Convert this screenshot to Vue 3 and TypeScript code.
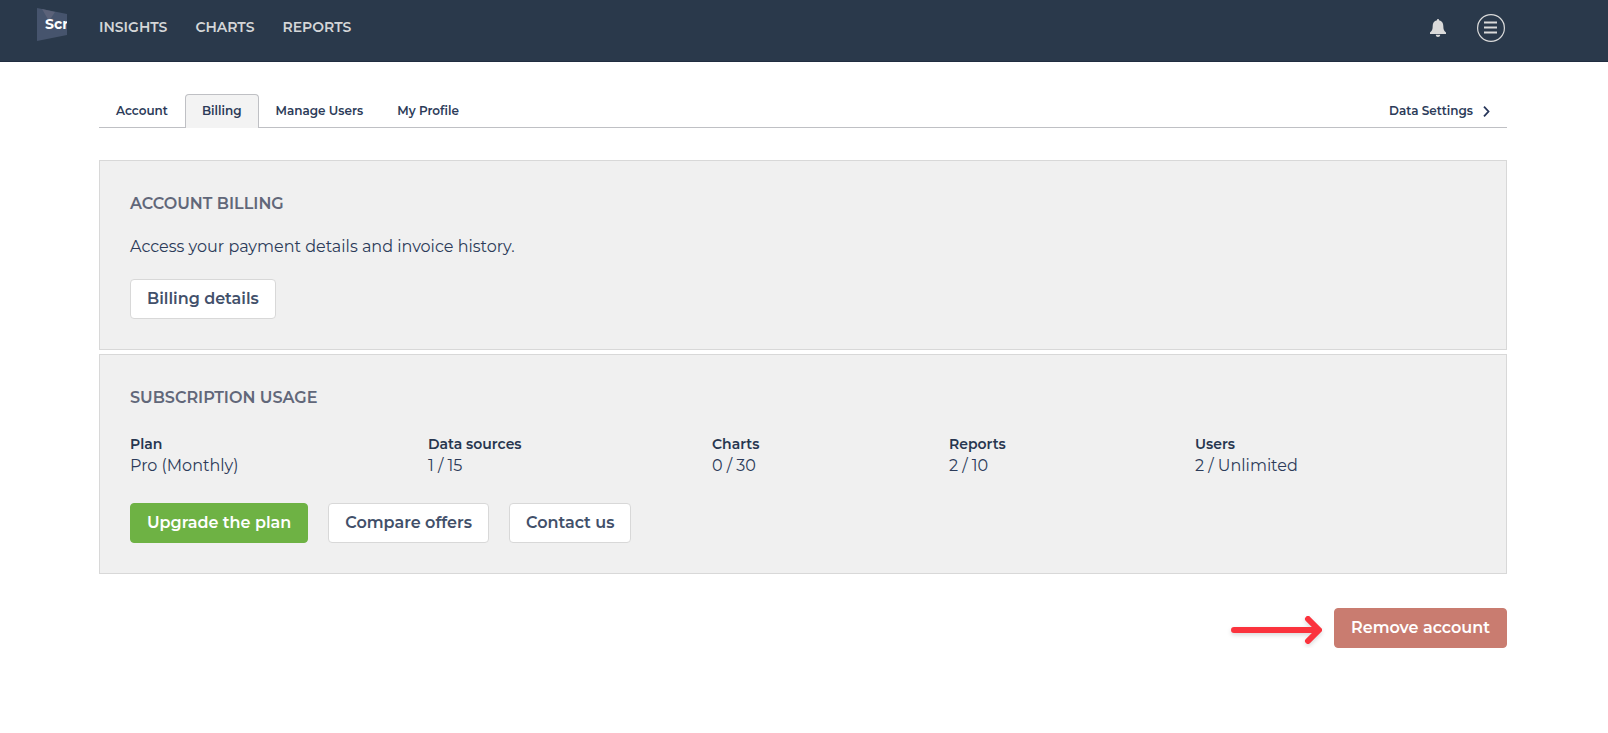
<script setup lang="ts">
interface NavItem {
  label: string
  active?: boolean
}

interface UsageItem {
  label: string
  value: string
}

const mainNav: NavItem[] = [{ label: 'INSIGHTS' }, { label: 'CHARTS' }, { label: 'REPORTS' }]

const tabs: NavItem[] = [
  { label: 'Account' },
  { label: 'Billing', active: true },
  { label: 'Manage Users' },
  { label: 'My Profile' },
]

const usage: UsageItem[] = [
  { label: 'Plan', value: 'Pro (Monthly)' },
  { label: 'Data sources', value: '1 / 15' },
  { label: 'Charts', value: '0 / 30' },
  { label: 'Reports', value: '2 / 10' },
  { label: 'Users', value: '2 / Unlimited' },
]
</script>

<template>
  <div class="page">
    <header class="topbar">
      <a class="logo" href="#">
        <svg class="logo-shape" viewBox="0 0 30 34" aria-hidden="true">
          <path d="M0 0 L30 6 V27 L0 33 Z" fill="#46546d" />
          <path d="M5 1 L18 4 L12 13 Z" fill="#5b6279" />
        </svg>
        <span class="logo-text">Scr</span>
      </a>
      <nav class="main-nav">
        <a v-for="item in mainNav" :key="item.label" href="#">{{ item.label }}</a>
      </nav>
      <div class="tools">
        <button class="icon-button" type="button" aria-label="Notifications">
          <svg width="16" height="18" viewBox="0 0 16 18" aria-hidden="true">
            <path
              d="M8 0 C8.700 0 9 .5 9 1.200 C12 1.700 13.300 4 13.300 7 C13.300 10.500 14 12 16 13.500 V15 H0 V13.500 C2 12 2.700 10.500 2.700 7 C2.700 4 4 1.700 7 1.200 C7 .5 7.300 0 8 0 Z M5.800 15.700 H10.200 C10.200 17 9.200 18 8 18 C6.800 18 5.800 17 5.800 15.700 Z"
              fill="#dadada"
            />
          </svg>
        </button>
        <button class="icon-button" type="button" aria-label="Menu">
          <svg width="28" height="28" viewBox="0 0 28 28" aria-hidden="true">
            <circle cx="14" cy="14" r="13.400" fill="none" stroke="#dadada" stroke-width="1.200" />
            <path d="M7 8.500 H20 M7 13.500 H20 M7 18.500 H20" stroke="#dadada" stroke-width="2" />
          </svg>
        </button>
      </div>
    </header>

    <main class="content">
      <nav class="tabs">
        <a
          v-for="tab in tabs"
          :key="tab.label"
          class="tab"
          :class="{ active: tab.active }"
          href="#"
          >{{ tab.label }}</a
        >
        <a class="tab data-settings" href="#">
          Data Settings
          <svg width="7" height="11" viewBox="0 0 7 11" aria-hidden="true">
            <path d="M1 .7 L5.500 5.500 L1 10.300" fill="none" stroke="#27365a" stroke-width="1.800" />
          </svg>
        </a>
      </nav>

      <section class="card">
        <h2>ACCOUNT BILLING</h2>
        <p>Access your payment details and invoice history.</p>
        <div class="actions">
          <button class="btn" type="button">Billing details</button>
        </div>
      </section>

      <section class="card">
        <h2>SUBSCRIPTION USAGE</h2>
        <dl class="usage">
          <div v-for="item in usage" :key="item.label">
            <dt>{{ item.label }}</dt>
            <dd>{{ item.value }}</dd>
          </div>
        </dl>
        <div class="actions">
          <button class="btn primary" type="button">Upgrade the plan</button>
          <button class="btn" type="button">Compare offers</button>
          <button class="btn" type="button">Contact us</button>
        </div>
      </section>

      <div class="danger-zone">
        <svg class="arrow" width="91" height="28" viewBox="0 0 91 28" aria-hidden="true">
          <path
            d="M3 14 H86 M77 3 L88 14 L77 25"
            fill="none"
            stroke="#fb333d"
            stroke-width="6"
            stroke-linecap="round"
            stroke-linejoin="round"
          />
        </svg>
        <button class="btn danger" type="button">Remove account</button>
      </div>
    </main>
  </div>
</template>

<style>
body {
  margin: 0;
  background: #fff;
}
</style>

<style scoped>
.page {
  font-family: Montserrat, Inter, 'Open Sans', sans-serif;
  color: #2c3b59;
}

a {
  color: inherit;
  text-decoration: none;
}

.topbar {
  box-sizing: border-box;
  display: flex;
  align-items: flex-start;
  height: 62px;
  padding: 0 103px 0 37px;
  background: #2a394b;
  border-bottom: 1px solid #202d40;
}

.logo {
  display: grid;
  width: 30px;
  height: 34px;
  margin: 8px 32px 0 0;
  overflow: hidden;
}

.logo-shape,
.logo-text {
  grid-area: 1 / 1;
}

.logo-shape {
  width: 30px;
  height: 34px;
}

.logo-text {
  padding-left: 8px;
  color: #fff;
  font-size: 14px;
  font-weight: 700;
  line-height: 32px;
}

.main-nav {
  display: flex;
  gap: 28px;
  color: #d4d6d8;
  font-size: 14px;
  font-weight: 600;
  line-height: 54px;
}

.tools {
  display: flex;
  align-items: center;
  gap: 31px;
  height: 56px;
  margin-left: auto;
}

.icon-button {
  display: flex;
  padding: 0;
  border: 0;
  background: none;
}

.content {
  padding: 32px 101px 0 99px;
}

.tabs {
  display: flex;
  margin-bottom: 32px;
  border-bottom: 1px solid #bfc0c4;
  font-size: 12px;
  font-weight: 600;
}

.tab {
  padding: 0 16px;
  border: 1px solid transparent;
  border-bottom: 0;
  line-height: 32px;
}

.tab.active {
  margin-bottom: -1px;
  padding-bottom: 1px;
  border-color: #bfc0c4;
  border-radius: 4px 4px 0 0;
  background: #f3f3f3;
}

.data-settings {
  display: flex;
  align-items: center;
  gap: 10px;
  margin-left: auto;
}

.card {
  margin-bottom: 4px;
  padding: 30px;
  border: 1px solid #d8d8d8;
  background: #f0f0f0;
}

h2 {
  margin: 0 0 18px;
  color: #616779;
  font-size: 16px;
  font-weight: 600;
  line-height: 26px;
}

p {
  margin: 0 0 20px;
  font-size: 16px;
  font-weight: 400;
  line-height: 24px;
}

.usage {
  display: grid;
  grid-template-columns: 298fr 284fr 237fr 246fr 281fr;
  margin: 22px 0 26px;
}

dt {
  color: #27364f;
  font-size: 14px;
  font-weight: 600;
  line-height: 22px;
}

dd {
  margin: 0;
  font-size: 16px;
  font-weight: 400;
  line-height: 22px;
}

.actions {
  display: flex;
  gap: 20px;
}

.btn {
  height: 40px;
  padding: 0 16px 2px;
  border: 1px solid #d8d8d8;
  border-radius: 4px;
  background: #fff;
  color: #42506a;
  font-family: inherit;
  font-size: 16px;
  font-weight: 600;
}

.btn.primary {
  border-color: #6eb244;
  background: #6eb244;
  color: #fff;
}

.btn.danger {
  border-color: #c97c70;
  background: #c97c70;
  color: #fff;
}

.danger-zone {
  display: flex;
  align-items: center;
  justify-content: flex-end;
  gap: 12px;
  margin-top: 34px;
}

.arrow {
  margin-top: 4px;
  overflow: visible;
  filter: drop-shadow(0 2px 2px rgb(0 0 0 / 15%));
}
</style>
